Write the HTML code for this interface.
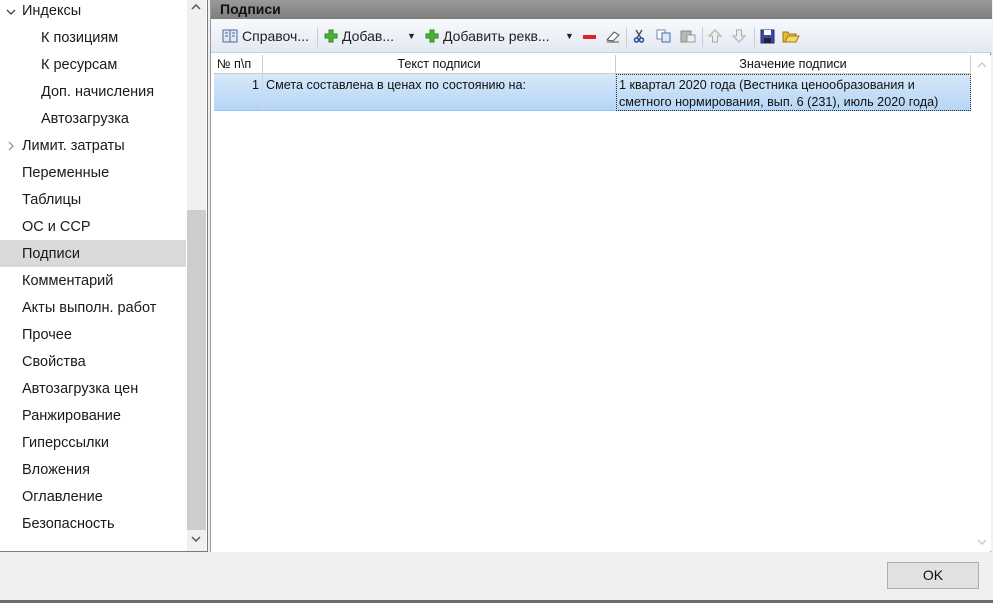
<!DOCTYPE html>
<html><head><meta charset="utf-8"><style>
*{margin:0;padding:0;box-sizing:border-box}
body{width:993px;height:603px;background:#f0f0f0;font-family:"Liberation Sans","DejaVu Sans",sans-serif;position:relative;overflow:hidden}
.left{position:absolute;left:0;top:0;width:208px;height:552px;background:#fff;border-right:1px solid #7a7a7a;border-bottom:1px solid #7a7a7a}
.it{position:absolute;left:22px;font-size:14.5px;color:#1a1a1a;height:27px;line-height:27px;white-space:nowrap}
.sub{left:41px}
.sel{position:absolute;left:0;top:240px;width:186px;height:27px;background:#d9d9d9}
.sb{position:absolute;left:187px;top:0;width:19px;height:551px;background:#f0f0f0}
.thumb{position:absolute;left:187px;top:210px;width:19px;height:320px;background:#cdcdcd}
.right{position:absolute;left:210px;top:0;width:781px;height:552px;background:#fff;border-left:1px solid #999;border-right:1px solid #888}
.ttl{position:absolute;left:0;top:0;width:781px;height:19px;background:linear-gradient(#9a9a9a,#7d7d7d);font-weight:bold;font-size:14px;color:#111;padding-left:9px;line-height:18px}
.tb{position:absolute;left:0;top:19px;width:781px;height:34px;background:linear-gradient(#f7f9fc,#e3e9f2);border-bottom:1px solid #c9d3e0;font-size:14px;color:#222}
.tb span{position:absolute;top:9px;white-space:nowrap}
.sep{position:absolute;top:8px;width:1px;height:20px;background:#c5cdd8}
.ic{position:absolute;top:10px}
.grid{position:absolute;left:3px;top:55px;width:757px;font-size:12.6px;color:#111}
.hd{position:absolute;top:0;height:19px;line-height:18px;text-align:center;background:#fff;border-right:1px solid #ccc;border-bottom:1px solid #ccc}
.row{position:absolute;top:19px;left:0;width:757px;height:37px;background:linear-gradient(#d6e8fa,#b6d6f6);border-bottom:1px solid #9cc1e8}
.cell{position:absolute;top:0;height:37px;padding:3px 3px;line-height:17px;border-right:1px solid #c8d8ea;white-space:nowrap;overflow:hidden}
.vsb{position:absolute;left:762px;top:55px;width:18px;height:496px;background:#fff}
.ok{position:absolute;left:887px;top:562px;width:92px;height:27px;background:#e1e1e1;border:1px solid #adadad;font-size:14px;text-align:center;line-height:25px;color:#111}
.bot{position:absolute;left:0;top:600px;width:993px;height:3px;background:#6d6d6d}
</style></head><body>
<div class="left">
<div class="sel"></div>
<div class="sb"></div><div class="thumb"></div>
<svg style="position:absolute;left:190px;top:2px" width="12" height="10"><path d="M2 7 L6 3 L10 7" stroke="#555" stroke-width="1.5" fill="none"/></svg>
<svg style="position:absolute;left:190px;top:534px" width="12" height="10"><path d="M2 3 L6 7 L10 3" stroke="#555" stroke-width="1.5" fill="none"/></svg>
<svg style="position:absolute;left:6px;top:7px" width="10" height="10"><path d="M1 3 L5 7 L9 3" stroke="#444" stroke-width="1.3" fill="none"/></svg>
<svg style="position:absolute;left:7px;top:141px" width="8" height="10"><path d="M2 1 L6 5 L2 9" stroke="#999" stroke-width="1.3" fill="none"/></svg>
<div class="it" style="top:-2px">Индексы</div>
<div class="it sub" style="top:25px">К позициям</div>
<div class="it sub" style="top:52px">К ресурсам</div>
<div class="it sub" style="top:79px">Доп. начисления</div>
<div class="it sub" style="top:106px">Автозагрузка</div>
<div class="it" style="top:133px">Лимит. затраты</div>
<div class="it" style="top:160px">Переменные</div>
<div class="it" style="top:187px">Таблицы</div>
<div class="it" style="top:214px">ОС и ССР</div>
<div class="it" style="top:241px">Подписи</div>
<div class="it" style="top:268px">Комментарий</div>
<div class="it" style="top:295px">Акты выполн. работ</div>
<div class="it" style="top:322px">Прочее</div>
<div class="it" style="top:349px">Свойства</div>
<div class="it" style="top:376px">Автозагрузка цен</div>
<div class="it" style="top:403px">Ранжирование</div>
<div class="it" style="top:430px">Гиперссылки</div>
<div class="it" style="top:457px">Вложения</div>
<div class="it" style="top:484px">Оглавление</div>
<div class="it" style="top:511px">Безопасность</div>
</div>
<div class="right">
<div class="ttl">Подписи</div>
<div class="tb">
<svg class="ic" style="left:11px" width="16" height="14"><rect x="1" y="1" width="14" height="12" fill="#dfe8f5" stroke="#4a6a96"/><line x1="8" y1="1" x2="8" y2="13" stroke="#4a6a96"/><path d="M3 4h3M3 7h3M10 4h3M10 7h3" stroke="#4a6a96"/></svg>
<span style="left:31px">Справоч...</span>
<div class="sep" style="left:106px"></div>
<svg class="ic" style="left:113px" width="14" height="14"><path d="M5 1h4v4h4v4h-4v4h-4v-4h-4v-4h4z" fill="#4cb33a" stroke="#2a8a20"/></svg>
<span style="left:131px">Добав...</span>
<span style="left:196px;font-size:9px;top:12px">▼</span>
<svg class="ic" style="left:214px" width="14" height="14"><path d="M5 1h4v4h4v4h-4v4h-4v-4h-4v-4h4z" fill="#4cb33a" stroke="#2a8a20"/></svg>
<span style="left:232px">Добавить рекв...</span>
<span style="left:354px;font-size:9px;top:12px">▼</span>
<div style="position:absolute;left:372px;top:16px;width:13px;height:4px;background:#e0202a"></div>
<svg class="ic" style="left:394px" width="16" height="14"><path d="M2 11 L9 3 L14 6 L8 12 Z" fill="#fff" stroke="#555"/><line x1="2" y1="13" x2="14" y2="13" stroke="#555"/></svg>
<div class="sep" style="left:415px"></div>
<svg class="ic" style="left:422px" width="12" height="14"><path d="M3 1 L8 9 M9 1 L4 9" stroke="#555" stroke-width="1.5"/><circle cx="3.5" cy="11" r="2" fill="none" stroke="#2a4aa0" stroke-width="1.5"/><circle cx="8.5" cy="11" r="2" fill="none" stroke="#2a4aa0" stroke-width="1.5"/></svg>
<svg class="ic" style="left:445px" width="15" height="14"><rect x="1" y="1" width="8" height="9" fill="#fff" stroke="#7a8aa5"/><rect x="6" y="4" width="8" height="9" fill="#dde6f4" stroke="#4a6aa5"/></svg>
<svg class="ic" style="left:469px" width="16" height="14"><rect x="1" y="2" width="10" height="11" fill="#b8b8b8" stroke="#888"/><rect x="7" y="6" width="8" height="7" fill="#eee" stroke="#999"/></svg>
<div class="sep" style="left:491px"></div>
<svg class="ic" style="left:497px" width="14" height="14"><path d="M7 1 L13 7 H9.5 V13 H4.5 V7 H1 Z" fill="#eee" stroke="#aaa"/></svg>
<svg class="ic" style="left:521px" width="14" height="14"><path d="M7 13 L13 7 H9.5 V1 H4.5 V7 H1 Z" fill="#eee" stroke="#aaa"/></svg>
<div class="sep" style="left:543px"></div>
<svg class="ic" style="left:549px" width="15" height="15"><rect x="1" y="1" width="13" height="13" fill="#3a4aa8" stroke="#222a70"/><rect x="4" y="1" width="7" height="5" fill="#fff"/><rect x="4" y="9" width="7" height="5" fill="#223"/></svg>
<svg class="ic" style="left:571px" width="18" height="14"><path d="M1 3h5l1 2h7v8H1z" fill="#e9b93a" stroke="#a07818"/><path d="M3 13 L6 7 H17 L14 13 Z" fill="#f7d86a" stroke="#a07818"/></svg>
</div>
<div class="grid">
<div class="hd" style="left:0;width:49px;text-align:left;padding-left:3px">№ п\п</div>
<div class="hd" style="left:49px;width:353px">Текст подписи</div>
<div class="hd" style="left:402px;width:355px">Значение подписи</div>
<div class="row">
<div class="cell" style="left:0;width:49px;text-align:right">1</div>
<div class="cell" style="left:49px;width:353px">Смета составлена в ценах по состоянию на:</div>
<div class="cell" style="left:402px;width:355px;border:1px dotted #333;padding:2px 2px">1 квартал 2020 года (Вестника ценообразования и<br>сметного нормирования, вып. 6 (231), июль 2020 года)</div>
</div>
</div>
<div class="vsb">
<svg style="position:absolute;left:3px;top:5px" width="12" height="10"><path d="M2 7 L6 3 L10 7" stroke="#ccc" stroke-width="1.5" fill="none"/></svg>
<svg style="position:absolute;left:3px;top:482px" width="12" height="10"><path d="M2 3 L6 7 L10 3" stroke="#ccc" stroke-width="1.5" fill="none"/></svg>
</div>
</div>
<div class="ok">OK</div>
<div class="bot"></div>
</body></html>
